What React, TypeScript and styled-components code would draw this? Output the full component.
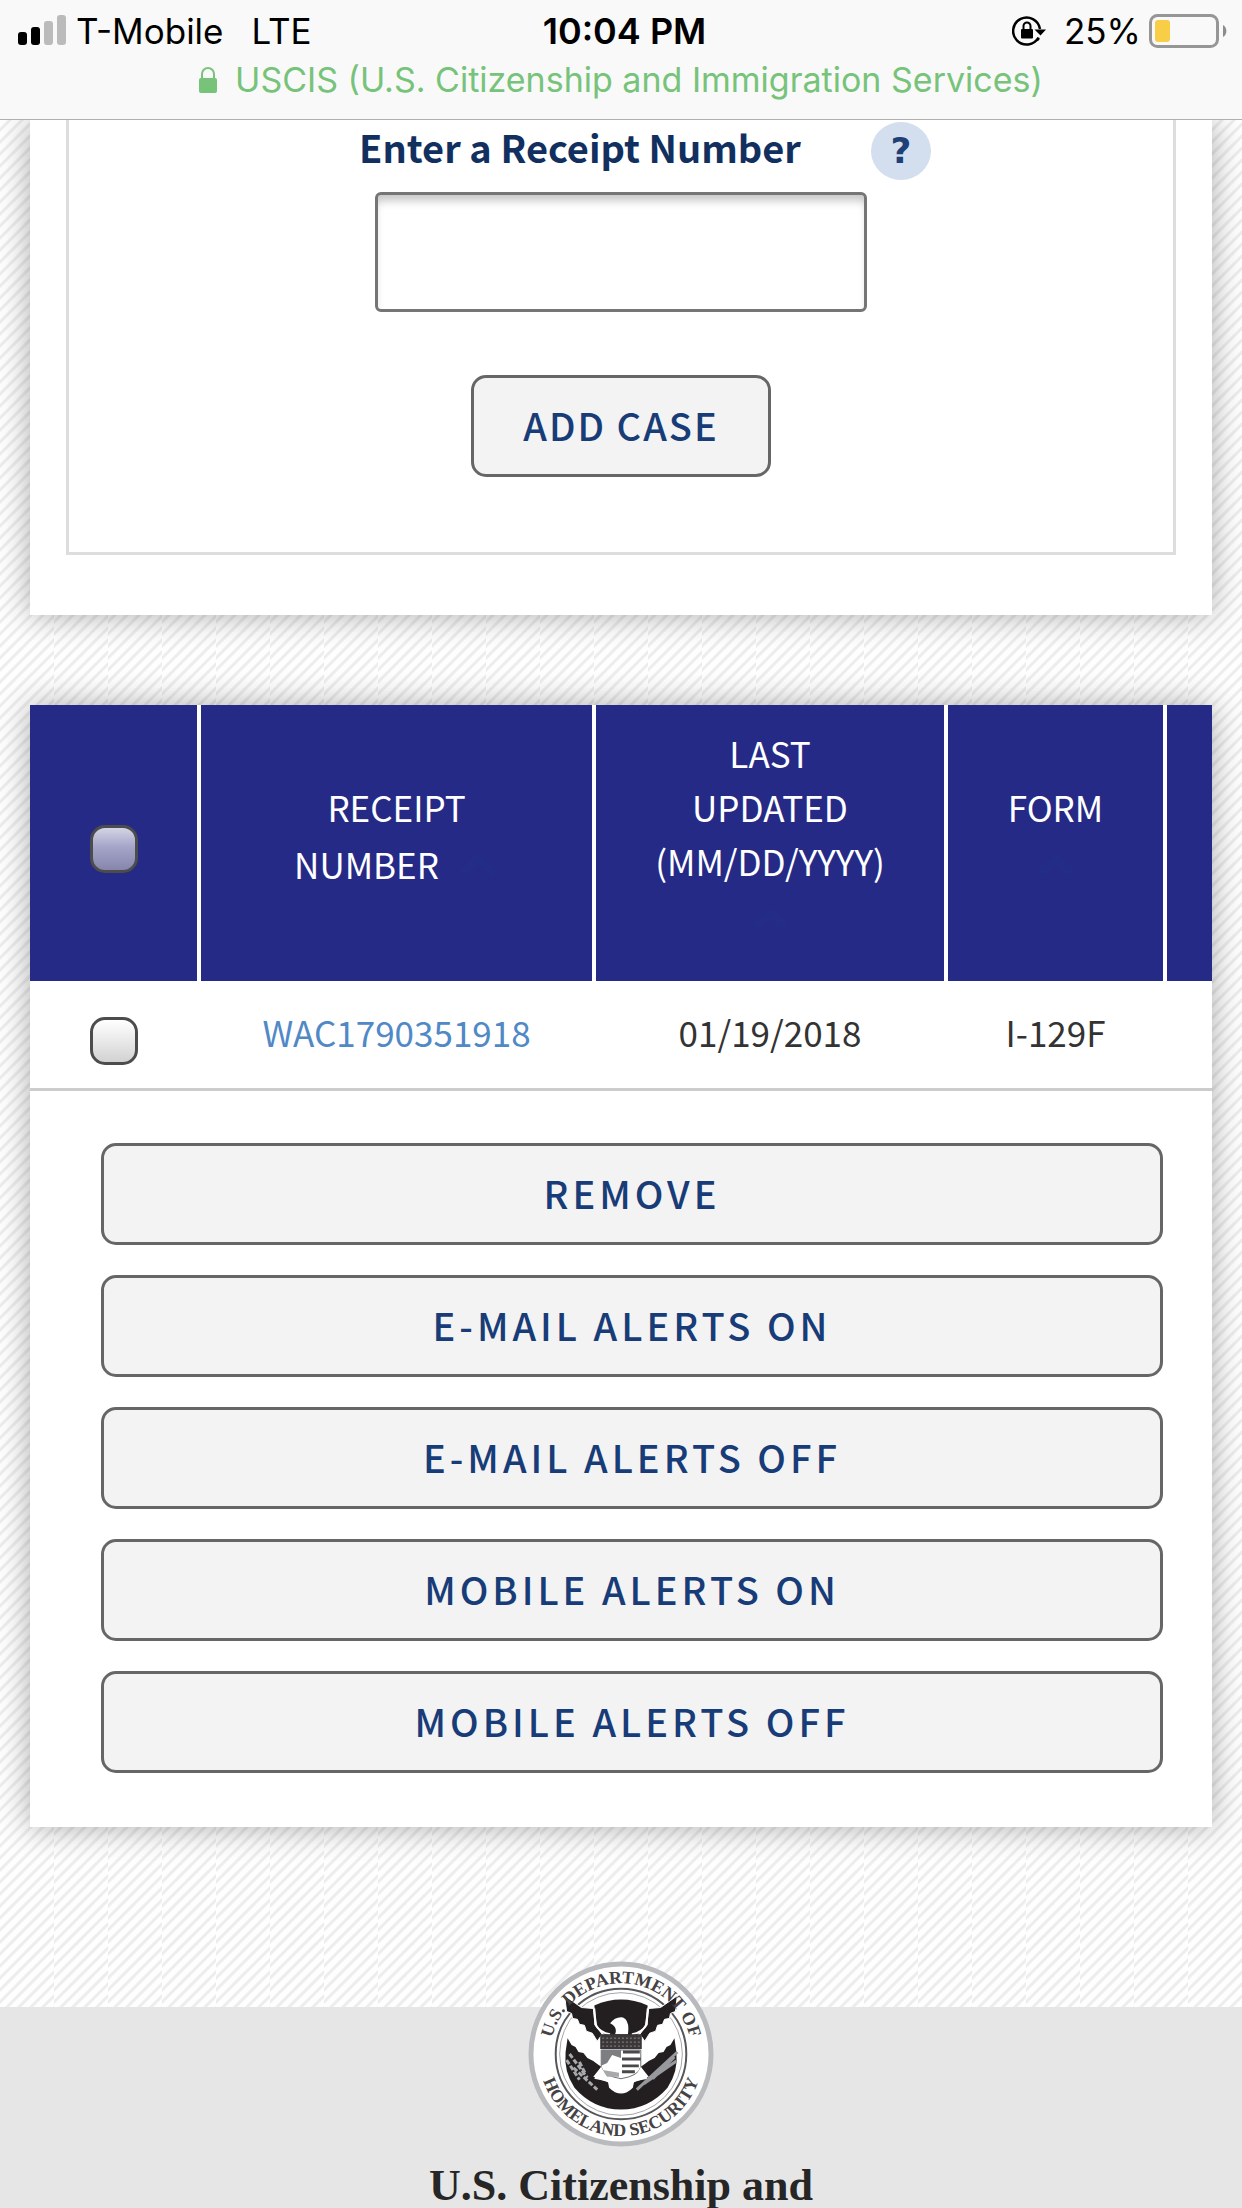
import React from "react";
import styled, { createGlobalStyle } from "styled-components";

const hatch = encodeURIComponent(
  `<svg xmlns="http://www.w3.org/2000/svg" width="54" height="36"><rect width="54" height="36" fill="#fefefe"/><path d="M-6 4L4 -6M-6 16L16 -6M-6 28L28 -6M-6 40L40 -6M4 42L52 -6M16 42L60 -2M28 42L60 10M40 42L60 22M52 42L60 34" stroke="#ededed" stroke-width="3"/></svg>`
);

const GlobalStyle = createGlobalStyle`
  *, *::before, *::after { box-sizing: border-box; }
  body {
    margin: 0;
    background: #fefefe url("data:image/svg+xml,${hatch}");
    font-family: "Noto Sans CJK SC", "Open Sans", sans-serif;
    color: #333333;
  }
`;

const Page = styled.div`
  min-height: 100vh;
  display: flex;
  flex-direction: column;
`;

const BrowserBar = styled.header`
  flex: none;
  height: 120px;
  border-bottom: 1px solid #b0b0b0;
  background: #f9f9f9;
  font-family: Inter, "Liberation Sans", sans-serif;
  position: relative;
  z-index: 1;
`;

const StatusRow = styled.div`
  display: grid;
  grid-template-columns: 1fr auto 1fr;
  align-items: center;
  height: 62px;
  padding: 0 15px 0 18px;
  font-size: 35px;
  line-height: 62px;
  color: #000000;
`;

const Carrier = styled.div`
  display: flex;
  align-items: center;
  gap: 10px;
`;

const Network = styled.span`
  padding-left: 18px;
`;

const Clock = styled.time`
  padding-left: 4px;
  font-size: 36px;
  font-weight: 600;
`;

const Power = styled.div`
  display: flex;
  align-items: center;
  justify-content: flex-end;
  gap: 8px;
`;

const RotationLock = styled.svg`
  margin-right: 10px;
`;

const Address = styled.div`
  display: flex;
  align-items: center;
  justify-content: center;
  gap: 18px;
  height: 36px;
  font-size: 34px;
  line-height: 36px;
  color: #76c379;
`;

const Content = styled.main`
  flex: none;
  padding: 0 30px;
`;

const Card = styled.section`
  background: #ffffff;
  box-shadow: 0 0 30px rgba(0, 0, 0, 0.32);
`;

const FormCard = styled(Card)`
  padding: 0 36px 60px;
`;

const CaseForm = styled.form`
  display: flex;
  flex-direction: column;
  align-items: center;
  border: 3px solid #dddddd;
  border-top: 0;
  padding: 0 0 75px;
`;

const LabelRow = styled.div`
  display: flex;
  align-items: center;
  gap: 70px;
  height: 62px;
  margin: 0 0 10px 48px;
`;

const Label = styled.label`
  padding-bottom: 8px;
  font-size: 38px;
  line-height: 54px;
  font-weight: 700;
  color: #12305f;
`;

const Help = styled.button`
  width: 60px;
  height: 58px;
  padding: 0;
  border: 0;
  border-radius: 50%;
  background: #d3deef;
  color: #1f3f77;
  font: 700 36px/58px "DejaVu Sans", sans-serif;
`;

const ReceiptInput = styled.input`
  width: 492px;
  height: 120px;
  padding: 0 24px;
  border: 3px solid #757575;
  border-radius: 6px;
  background: #ffffff;
  box-shadow: inset 0 9px 9px -3px rgba(0, 0, 0, 0.22);
  font: 400 42px "Noto Sans CJK SC", sans-serif;
`;

const Button = styled.button`
  height: 102px;
  padding: 0 45px 2px;
  border: 3px solid #666666;
  border-radius: 15px;
  background: #f3f3f3;
  color: #183c78;
  font: 500 38px/54px "Noto Sans CJK SC", "Open Sans", sans-serif;
  letter-spacing: 4px;
  text-transform: uppercase;
`;

const AddButton = styled(Button)`
  width: 300px;
  margin-top: 63px;
  letter-spacing: 2px;
`;

const CasesCard = styled(Card)`
  margin-top: 90px;
`;

const TableScroll = styled.div`
  overflow: hidden;
`;

const Table = styled.table`
  width: 100%;
  border-collapse: separate;
  border-spacing: 0;
  table-layout: fixed;
  font-size: 35px;
  line-height: 54px;
`;

const Column = styled.col<{ $width?: number }>`
  width: ${(p) => (p.$width ? `${p.$width}px` : "auto")};
`;

const HeadCell = styled.th`
  height: 276px;
  padding: 0;
  border-right: 4px solid #ffffff;
  background: #252a87;
  color: #ffffff;
  font-weight: 400;
  text-transform: uppercase;
  vertical-align: middle;

  &:last-child { border-right: 0; }
`;

const HeadContent = styled.div`
  display: flex;
  flex-direction: column;
  align-items: center;
`;

const HeadLine = styled.span`
  padding-bottom: 6px;
  line-height: 48px;
`;

const WithArrow = styled.div`
  display: flex;
  align-items: flex-start;
  gap: 18px;

  ${HeadLine} { padding-top: 3px; }
`;

const Cell = styled.td`
  height: 110px;
  padding: 0 4px 6px 0;
  border-bottom: 3px solid #cccccc;
  text-align: center;
  vertical-align: middle;
`;

const CheckCell = styled(Cell)`
  padding-bottom: 0;
`;

const CaseLink = styled.a`
  color: #5089c6;
  text-decoration: none;
`;

const CheckBox = styled.input<{ $tinted?: boolean }>`
  appearance: none;
  display: block;
  width: 48px;
  height: 48px;
  margin: 12px auto 0;
  border: 3px solid #4c4c4c;
  border-radius: 15px;
  background: ${(p) =>
    p.$tinted
      ? "linear-gradient(#d4d4e6, #a5a5c9 45%, #8686ad)"
      : "linear-gradient(#ffffff, #d2d2d2)"};
`;

const Actions = styled.div`
  display: flex;
  flex-direction: column;
  gap: 30px;
  padding: 52px 49px 54px 71px;
`;

const Footer = styled.footer`
  flex: 1 0 auto;
  margin-top: 180px;
  background: #e6e6e6;
  display: flex;
  flex-direction: column;
  align-items: center;
`;

const Seal = styled.svg`
  margin-top: -46px;
`;

const Agency = styled.p`
  margin: 18px 0 0;
  font: 700 44px/42px "Liberation Serif", serif;
  color: #262626;
  white-space: nowrap;
`;

const SignalIcon = () => (
  <svg width="48" height="36" viewBox="0 0 48 36" aria-hidden="true">
    <rect x="0" y="19" width="9" height="13" rx="3" fill="#000" />
    <rect x="13" y="14" width="9" height="18" rx="3" fill="#000" />
    <rect x="26" y="8" width="9" height="24" rx="3" fill="#bbb" />
    <rect x="39" y="2" width="9" height="30" rx="3" fill="#bbb" />
  </svg>
);

const BatteryIcon = () => (
  <svg width="78" height="34" viewBox="0 0 78 34" aria-hidden="true">
    <rect x="1.5" y="1.5" width="67" height="31" rx="7" fill="none" stroke="#969696" strokeWidth="3" />
    <rect x="6" y="6" width="15" height="22" rx="3" fill="#f7ce45" />
    <path d="M74 11a7 7 0 0 1 0 12z" fill="#8d8d8d" />
  </svg>
);

const LockRotation = () => (
  <RotationLock width="34" height="32" viewBox="0 0 34 32" aria-hidden="true">
    <path d="M26.5 22.500A13.500 13.500 0 1 1 28 14M25 25.500L27 23" fill="none" stroke="#000" strokeWidth="2.5" />
    <path d="M22.500 14.500H34L28.500 20.500Z" fill="#000" />
    <rect x="9" y="14" width="12" height="9.500" rx="1" fill="#000" />
    <path d="M11.500 15V11a3.500 3.500 0 0 1 7 0V15" fill="none" stroke="#000" strokeWidth="2" />
  </RotationLock>
);

const PadlockIcon = () => (
  <svg width="18" height="26" viewBox="0 0 18 26" aria-hidden="true">
    <rect x="0" y="11" width="18" height="15" rx="2" fill="#76c379" />
    <path d="M3 12V7a6 6 0 0 1 12 0v5" fill="none" stroke="#76c379" strokeWidth="2" />
  </svg>
);

const SortArrow = () => (
  <svg width="42" height="66" viewBox="0 0 42 66" aria-hidden="true">
    <rect width="42" height="66" rx="6" fill="#262a87" />
    <path d="M5 36L21 22L37 36" fill="none" stroke="#232d87" strokeWidth="8" />
  </svg>
);

const SealIcon = () => (
  <Seal width="186" height="186" viewBox="0 0 188 188" role="img" aria-label="Department of Homeland Security seal">
    <defs>
      <path id="sealTop" d="M22.500 94A71.500 71.500 0 0 1 165.500 94" />
      <path id="sealBottom" d="M11 94A83 83 0 0 0 177 94" />
    </defs>
    <circle cx="94" cy="94" r="91" fill="#fff" stroke="#b8babd" strokeWidth="5" />
    <circle cx="94" cy="94" r="66" fill="none" stroke="#55555a" strokeWidth="2" />
    <circle cx="94" cy="94" r="62" fill="#fff" stroke="#a5a5a9" strokeWidth="1" />
    <path d="M40 78L44 85L48 87L51 92L56 93L60 98L66 101L70 104L74 107L66 117L82 123Q94 138 106 123L122 117L114 107L118 104L122 101L128 98L132 93L137 92L140 87L144 85L148 78L150 92Q152 112 141 128Q122 150 94 150Q66 150 47 128Q36 112 38 92Z" fill="#231f20" />
    <path d="M67 45Q94 33 121 45L118 66L110 75H78L70 66Z" fill="#231f20" />
    <g fill="#231f20" stroke="#fff" strokeWidth="1">
      <path d="M37 35L39 51L44 53L45 58L50 59L52 64L57 65L59 71L65 73L70 81L75 74L68 65L66 48L54 47Z" />
      <path d="M151 35L149 51L144 53L143 58L138 59L136 64L131 65L129 71L123 73L118 81L113 74L120 65L122 48L134 47Z" />
    </g>
    <path d="M67 48L68 64Q73 73 83 74M121 48L120 64Q115 73 105 74" fill="none" stroke="#fff" strokeWidth="2" />
    <path d="M88 74Q91 67 83 63Q88 56 96 57Q103 60 101 74Z" fill="#fff" />
    <rect x="73" y="74" width="42" height="15" fill="#3b3738" />
    <path d="M75 78H113M75 82H113M75 86H113" stroke="#88888b" strokeWidth="1" strokeDasharray="2 2" />
    <path d="M74 90H114V107Q112 116 94 119Q76 116 74 107Z" fill="#fff" stroke="#6d6e71" strokeWidth="1" />
    <path d="M74 90H94V98L85 95L80 103L74 106Z" fill="#7d7e82" />
    <path d="M96 92H113M95 99H114M95 106H112M95 112H108" stroke="#4a484a" strokeWidth="3" />
    <path d="M74 110L92 113V117L80 117Z" fill="#a8a9ac" />
    <path d="M80 118L94 121L108 118L106 128Q94 140 82 128Z" fill="#fff" />
    <path d="M74 107L67 119L82 122M114 107L121 119L106 122" fill="#fff" />
    <path d="M42 94L60 118M39 100L52 120M46 108L70 130M52 102L58 114" stroke="#a9a9ac" strokeWidth="3" fill="none" strokeDasharray="5 2" />
    <path d="M110 130L151 92M117 124L150 101M126 119L148 97" stroke="#98999c" strokeWidth="3" fill="none" />
    <g fill="#454244" fontFamily="Liberation Serif, serif" fontSize="18" fontWeight="700">
      <text textAnchor="middle">
        <textPath href="#sealTop" startOffset="50%">U.S. DEPARTMENT OF</textPath>
      </text>
      <text textAnchor="middle">
        <textPath href="#sealBottom" startOffset="50%">HOMELAND SECURITY</textPath>
      </text>
    </g>
  </Seal>
);

const actions = [
  "Remove",
  "E-mail alerts on",
  "E-mail alerts off",
  "Mobile alerts on",
  "Mobile alerts off",
];

export default function App() {
  return (
    <Page>
      <GlobalStyle />
      <BrowserBar>
        <StatusRow>
          <Carrier>
            <SignalIcon />
            <span>T-Mobile</span>
            <Network>LTE</Network>
          </Carrier>
          <Clock>10:04 PM</Clock>
          <Power>
            <LockRotation />
            <span>25%</span>
            <BatteryIcon />
          </Power>
        </StatusRow>
        <Address>
          <PadlockIcon />
          <span>USCIS (U.S. Citizenship and Immigration Services)</span>
        </Address>
      </BrowserBar>

      <Content>
        <FormCard>
          <CaseForm onSubmit={(e) => e.preventDefault()}>
            <LabelRow>
              <Label htmlFor="receipt">Enter a Receipt Number</Label>
              <Help type="button">?</Help>
            </LabelRow>
            <ReceiptInput id="receipt" type="text" />
            <AddButton type="submit">Add case</AddButton>
          </CaseForm>
        </FormCard>

        <CasesCard>
          <TableScroll>
            <Table>
              <colgroup>
                <Column $width={171} />
                <Column $width={395} />
                <Column $width={352} />
                <Column $width={219} />
                <Column />
              </colgroup>
              <thead>
                <tr>
                  <HeadCell scope="col">
                    <CheckBox type="checkbox" aria-label="Select all cases" $tinted />
                  </HeadCell>
                  <HeadCell scope="col">
                    <HeadContent>
                      <HeadLine>Receipt</HeadLine>
                      <WithArrow>
                        <HeadLine>Number</HeadLine>
                        <SortArrow />
                      </WithArrow>
                    </HeadContent>
                  </HeadCell>
                  <HeadCell scope="col">
                    <HeadContent>
                      <HeadLine>Last</HeadLine>
                      <HeadLine>Updated</HeadLine>
                      <HeadLine>(mm/dd/yyyy)</HeadLine>
                      <SortArrow />
                    </HeadContent>
                  </HeadCell>
                  <HeadCell scope="col">
                    <HeadContent>
                      <HeadLine>Form</HeadLine>
                      <SortArrow />
                    </HeadContent>
                  </HeadCell>
                  <HeadCell scope="col" />
                </tr>
              </thead>
              <tbody>
                <tr>
                  <CheckCell>
                    <CheckBox type="checkbox" aria-label="Select case WAC1790351918" />
                  </CheckCell>
                  <Cell>
                    <CaseLink href="#case">WAC1790351918</CaseLink>
                  </Cell>
                  <Cell>01/19/2018</Cell>
                  <Cell>I-129F</Cell>
                  <Cell />
                </tr>
              </tbody>
            </Table>
          </TableScroll>
          <Actions>
            {actions.map((name) => (
              <Button type="button" key={name}>
                {name}
              </Button>
            ))}
          </Actions>
        </CasesCard>
      </Content>

      <Footer>
        <SealIcon />
        <Agency>U.S. Citizenship and</Agency>
      </Footer>
    </Page>
  );
}
